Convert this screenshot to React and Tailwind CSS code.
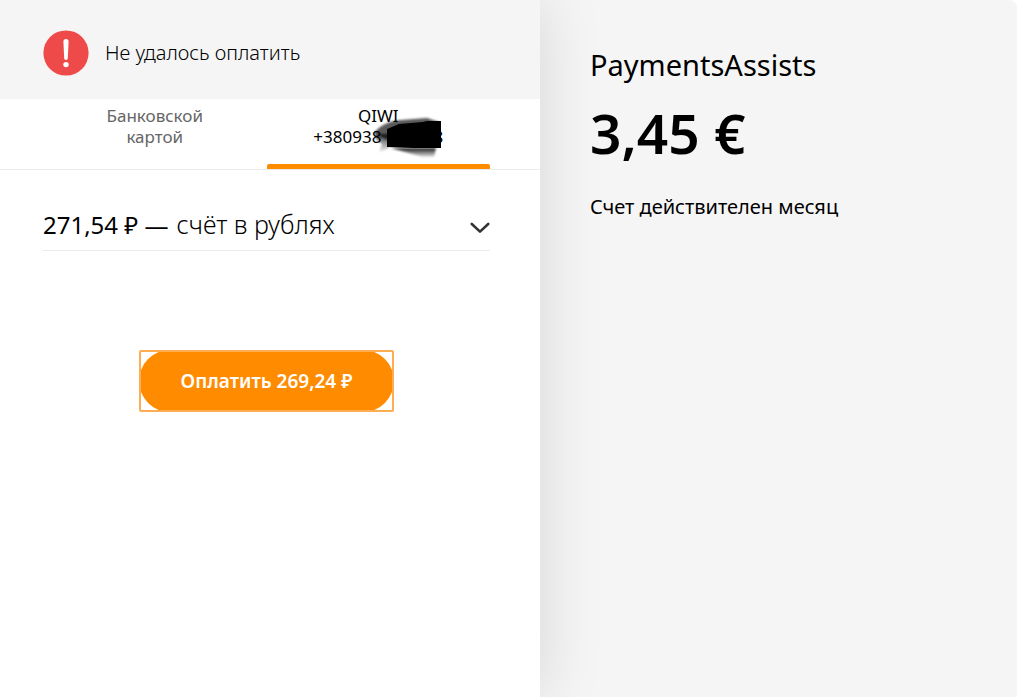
import { useState } from 'react'

const ErrorIcon = () => (
  <svg viewBox="0 0 46 46" className="w-[46px] h-[46px] shrink-0" aria-hidden="true">
    <circle cx="23" cy="23" r="22.6" fill="#ef4a4a" />
    <path d="M20.4 11.6a2.6 2.6 0 0 1 5.2 0l-.8 16.6a1.8 1.8 0 0 1-3.6 0z" fill="#fff" />
    <circle cx="23" cy="34.6" r="2.7" fill="#fff" />
  </svg>
)

const Chevron = () => (
  <svg viewBox="0 0 20 12" className="w-5 h-3 mt-1 shrink-0" aria-hidden="true">
    <path d="M1.8 2 10 9.6 18.2 2" fill="none" stroke="#333" strokeWidth="2.6" strokeLinecap="round" strokeLinejoin="round" />
  </svg>
)

// Marker strokes that hide the middle of the phone number
const Scribble = () => (
  <svg viewBox="0 0 80 44" className="absolute left-[60px] -top-[10px] w-20 h-11" aria-hidden="true">
    <defs>
      <filter id="soft" x="-20%" y="-20%" width="140%" height="140%">
        <feGaussianBlur stdDeviation="1" />
      </filter>
      <linearGradient id="smudge" x1="0" y1="0" x2="0" y2="1">
        <stop offset="0" stopColor="#000" />
        <stop offset="1" stopColor="#000" stopOpacity="0.1" />
      </linearGradient>
    </defs>
    <g filter="url(#soft)">
      <path d="M1 17C7 9 16 5 28 4L54 2l12 4v6L14 24z" fill="#000" opacity="0.65" />
      <path d="M2 18h14v14L6 36l3-8-6-5z" fill="url(#smudge)" opacity="0.75" />
      <path d="M18 32h45l-2 9H50l-18-5z" fill="url(#smudge)" opacity="0.9" />
    </g>
    <path d="M14 13 26 8 50 6l4-1h14v27H40l-26-1z" fill="#000" />
  </svg>
)

const App = () => {
  const [method, setMethod] = useState('qiwi')
  const [currency, setCurrency] = useState('rub')

  return (
    <div className="min-h-screen grid grid-cols-[540fr_477fr] bg-white text-black font-['Noto_Sans',sans-serif]">
      <main className="relative z-10 bg-white shadow-[0_0_60px_rgba(0,0,0,0.13)]">
        <div role="alert" className="flex items-center gap-4 h-[99px] px-[43px] pt-1.5 bg-[#f5f5f5]">
          <ErrorIcon />
          <p className="text-[20px] leading-[28px] font-light">Не удалось оплатить</p>
        </div>

        <div role="tablist" className="grid grid-cols-2 pl-[43px] pr-[50px] h-[71px] border-b border-[#ebebeb] text-[17px] leading-[21px]">
          <button
            type="button"
            role="tab"
            aria-selected={method === 'card'}
            onClick={() => setMethod('card')}
            className="flex flex-col items-center pt-1.5 text-[#666]"
          >
            <span>Банковской</span>
            <span>картой</span>
          </button>
          <button
            type="button"
            role="tab"
            aria-selected={method === 'qiwi'}
            onClick={() => setMethod('qiwi')}
            className="relative flex flex-col items-center pt-1.5"
          >
            <span>QIWI</span>
            <span className="relative flex">
              <span>+380938</span>
              <span className="w-[52px]" />
              <span>8</span>
              <Scribble />
            </span>
            <span className="absolute inset-x-0 bottom-0 h-[5px] rounded-t-xs bg-[#ff8c00]" />
          </button>
        </div>

        <form className="pl-[43px] pr-[50px] pt-8" onSubmit={(e) => e.preventDefault()}>
          <div className="flex items-center h-[49px] border-b border-[#ebebeb] text-[24px]">
            <label htmlFor="currency" className="mr-2 pb-0.5 whitespace-nowrap">271,54 ₽ —</label>
            <select
              id="currency"
              value={currency}
              onChange={(e) => setCurrency(e.target.value)}
              className="flex-1 min-w-0 pb-0.5 appearance-none bg-transparent text-[25px] font-light outline-none"
            >
              <option value="rub">счёт в рублях</option>
            </select>
            <Chevron />
          </div>

          <div className="flex justify-center mt-[99px]">
            <div className="outline-2 -outline-offset-2 outline-[#ffad52] rounded-xs">
              <button
                type="submit"
                className="block h-[62px] px-[42px] rounded-full bg-[#ff8c00] text-white text-[19px] font-semibold whitespace-nowrap"
              >
                Оплатить 269,24 ₽
              </button>
            </div>
          </div>
        </form>
      </main>

      <aside className="pl-[50px] pr-6 pt-[45px] bg-[#f5f5f5] rounded-tr-lg">
        <h1 className="text-[29px] leading-[40px]">PaymentsAssists</h1>
        <p className="mt-3 text-[55px] leading-[72px] font-semibold">3,45 €</p>
        <p className="mt-6 text-[20px] leading-[28px]">Счет действителен месяц</p>
      </aside>
    </div>
  )
}

export default App
